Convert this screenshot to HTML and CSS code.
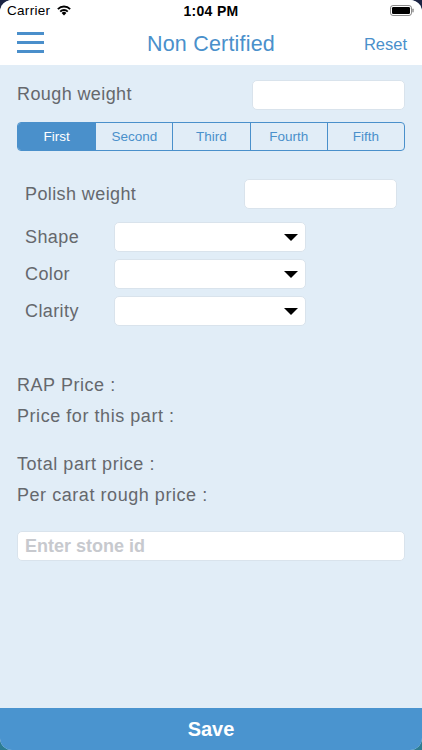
FILE: index.html
```html
<!DOCTYPE html>
<html lang="en">
<head>
<meta charset="utf-8">
<title>Non Certified</title>
<link rel="stylesheet" href="styles.css">
</head>
<body>
<div class="screen">
  <div class="status">
    <div class="status-left">
      <span class="carrier">Carrier</span>
      <svg class="wifi" width="16" height="12" viewBox="0 0 16 12">
        <path d="M8 11.5 L5.6 8.9 A3.4 3.4 0 0 1 10.4 8.9 Z" fill="#000"/>
        <path d="M3.6 6.9 A6.2 6.2 0 0 1 12.4 6.9 L11.1 8.2 A4.4 4.4 0 0 0 4.9 8.2 Z" fill="#000"/>
        <path d="M1.2 4.4 A9.6 9.6 0 0 1 14.8 4.4 L13.5 5.7 A7.8 7.8 0 0 0 2.5 5.7 Z" fill="#000"/>
      </svg>
    </div>
    <div class="time">1:04 PM</div>
    <div class="status-right">
      <svg class="battery" width="24" height="11" viewBox="0 0 24 11">
        <rect x="0.5" y="0.5" width="21" height="10" rx="2.5" fill="none" stroke="#000" stroke-opacity="0.45"/>
        <rect x="2" y="2" width="18" height="7" rx="1.2" fill="#000"/>
        <rect x="22.3" y="3.5" width="1.4" height="4" rx="0.7" fill="#000" fill-opacity="0.45"/>
      </svg>
    </div>
  </div>
  <div class="nav">
    <div class="menu"><span></span><span></span><span></span></div>
    <div class="title">Non Certified</div>
    <div class="reset">Reset</div>
  </div>
  <div class="content">
    <div class="row rough">
      <span class="label">Rough weight</span>
      <div class="field"></div>
    </div>
    <div class="segmented">
      <div class="seg active">First</div>
      <div class="seg">Second</div>
      <div class="seg">Third</div>
      <div class="seg">Fourth</div>
      <div class="seg">Fifth</div>
    </div>
    <div class="part">
      <div class="row polish">
        <span class="label">Polish weight</span>
        <div class="field"></div>
      </div>
      <div class="selects">
        <div class="sel-row"><span class="label sel-label">Shape</span><div class="select"><span class="arrow"></span></div></div>
        <div class="sel-row"><span class="label sel-label">Color</span><div class="select"><span class="arrow"></span></div></div>
        <div class="sel-row"><span class="label sel-label">Clarity</span><div class="select"><span class="arrow"></span></div></div>
      </div>
    </div>
    <div class="prices first">
      <div class="price">RAP Price :</div>
      <div class="price">Price for this part :</div>
    </div>
    <div class="prices second">
      <div class="price">Total part price :</div>
      <div class="price">Per carat rough price :</div>
    </div>
    <div class="stone"><span class="placeholder">Enter stone id</span></div>
  </div>
  <div class="save">Save</div>
</div>
</body>
</html>
```
FILE: styles.css
```css
*, *::before, *::after {
  box-sizing: border-box;
}
html, body {
  margin: 0;
  padding: 0;
}
body {
  background: linear-gradient(#1c2444 0%, #1c2444 50%, #2c7d92 100%);
  font-family: "Liberation Sans", Arial, sans-serif;
}
.screen {
  width: 422px;
  height: 750px;
  display: flex;
  flex-direction: column;
  background: #e1edf7;
  border-radius: 12px;
  overflow: hidden;
}
.status {
  height: 20px;
  background: #fff;
  display: flex;
  align-items: center;
  justify-content: space-between;
  padding: 1px 8px 0 7px;
  position: relative;
}
.status-left {
  display: flex;
  align-items: center;
  gap: 6px;
}
.carrier {
  font-size: 13.5px;
  letter-spacing: 0.3px;
  color: #000;
}
.wifi { display: block; margin-top: -1px; }
.time {
  position: absolute;
  left: 0;
  right: 0;
  top: 3px;
  text-align: center;
  font-size: 14px;
  font-weight: bold;
  letter-spacing: 0.3px;
  color: #000;
  pointer-events: none;
}
.battery { display: block; }
.nav {
  height: 45px;
  background: #fff;
  display: flex;
  align-items: center;
  justify-content: space-between;
  padding: 3px 15px 0 17px;
  position: relative;
}
.menu {
  width: 27px;
  display: flex;
  flex-direction: column;
  gap: 6px;
  margin-top: -4px;
}
.menu span {
  display: block;
  height: 3px;
  background: #4a8fcb;
}
.title {
  position: absolute;
  left: 0;
  right: 0;
  top: 12px;
  text-align: center;
  font-size: 21.5px;
  color: #4a90cb;
  letter-spacing: 0.2px;
  pointer-events: none;
}
.reset {
  font-size: 16.5px;
  color: #4a90cb;
  margin-top: 1px;
}
.content {
  flex: 1;
  padding: 0 17px;
}
.label {
  font-size: 18px;
  color: #65686d;
  letter-spacing: 0.4px;
}
.row {
  display: flex;
  align-items: center;
  justify-content: space-between;
}
.rough {
  margin-top: 15px;
}
.rough .label { margin-top: -2px; }
.field {
  width: 153px;
  height: 30px;
  background: #fff;
  border: 1px solid #d9e3ec;
  border-radius: 5px;
}
.segmented {
  margin-top: 12px;
  height: 29px;
  display: grid;
  grid-template-columns: repeat(5, 1fr);
  border: 1px solid #4a90cb;
  border-radius: 4px;
  overflow: hidden;
}
.seg {
  display: flex;
  align-items: center;
  justify-content: center;
  font-size: 13.5px;
  color: #4a90cb;
  border-left: 1px solid #4a90cb;
}
.seg:first-child { border-left: none; }
.seg.active {
  background: #4a90cb;
  color: #fff;
}
.part {
  padding: 0 8px;
}
.polish {
  margin-top: 28px;
}
.selects {
  margin-top: 13px;
  display: flex;
  flex-direction: column;
  gap: 7px;
}
.sel-row {
  display: flex;
  align-items: center;
}
.sel-label {
  width: 89px;
}
.select {
  width: 192px;
  height: 30px;
  background: #fff;
  border: 1px solid #d9e3ec;
  border-radius: 5px;
  display: flex;
  align-items: center;
  justify-content: flex-end;
  padding-right: 7px;
}
.arrow {
  width: 0;
  height: 0;
  border-left: 7.5px solid transparent;
  border-right: 7.5px solid transparent;
  border-top: 7px solid #000;
}
.prices {
  display: flex;
  flex-direction: column;
}
.prices.first { margin-top: 44px; }
.prices.second { margin-top: 18px; }
.price {
  font-size: 18px;
  line-height: 30.5px;
  color: #65686d;
  letter-spacing: 0.55px;
}
.stone {
  margin-top: 21px;
  height: 30px;
  background: #fff;
  border: 1px solid #d9e3ec;
  border-radius: 5px;
  display: flex;
  align-items: center;
  padding-left: 7px;
}
.placeholder {
  font-size: 18px;
  font-weight: bold;
  color: #c7c9ce;
}
.save {
  height: 42px;
  background: #4a94cf;
  color: #fff;
  font-size: 20px;
  font-weight: bold;
  display: flex;
  align-items: center;
  justify-content: center;
}
```
